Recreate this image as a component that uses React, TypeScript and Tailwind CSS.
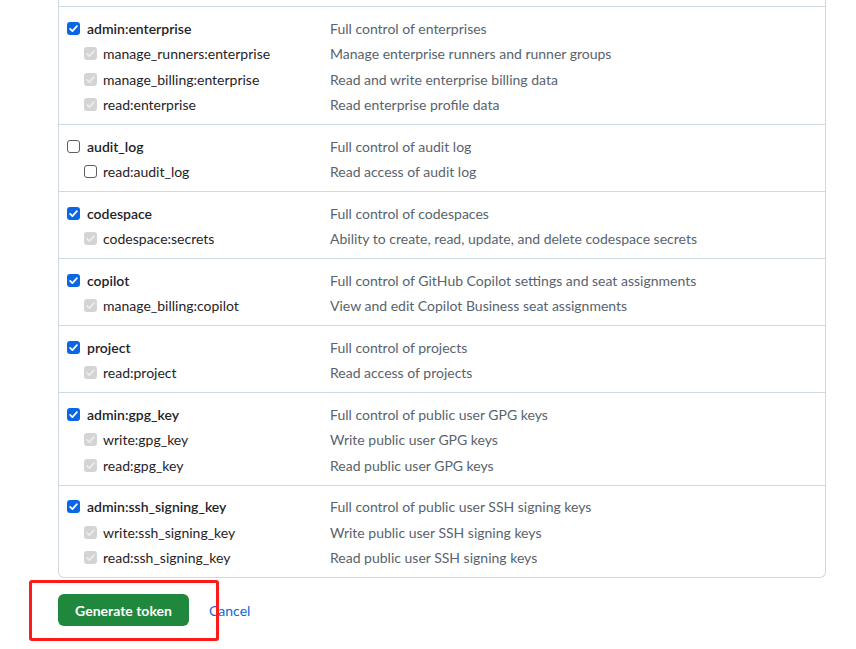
import React from "react"

type Scope = {
  name: string
  desc: string
  checked: boolean
  children: { name: string; desc: string }[]
}

const scopes: Scope[] = [
  {
    name: "admin:enterprise",
    desc: "Full control of enterprises",
    checked: true,
    children: [
      { name: "manage_runners:enterprise", desc: "Manage enterprise runners and runner groups" },
      { name: "manage_billing:enterprise", desc: "Read and write enterprise billing data" },
      { name: "read:enterprise", desc: "Read enterprise profile data" },
    ],
  },
  {
    name: "audit_log",
    desc: "Full control of audit log",
    checked: false,
    children: [{ name: "read:audit_log", desc: "Read access of audit log" }],
  },
  {
    name: "codespace",
    desc: "Full control of codespaces",
    checked: true,
    children: [
      { name: "codespace:secrets", desc: "Ability to create, read, update, and delete codespace secrets" },
    ],
  },
  {
    name: "copilot",
    desc: "Full control of GitHub Copilot settings and seat assignments",
    checked: true,
    children: [
      { name: "manage_billing:copilot", desc: "View and edit Copilot Business seat assignments" },
    ],
  },
  {
    name: "project",
    desc: "Full control of projects",
    checked: true,
    children: [{ name: "read:project", desc: "Read access of projects" }],
  },
  {
    name: "admin:gpg_key",
    desc: "Full control of public user GPG keys",
    checked: true,
    children: [
      { name: "write:gpg_key", desc: "Write public user GPG keys" },
      { name: "read:gpg_key", desc: "Read public user GPG keys" },
    ],
  },
  {
    name: "admin:ssh_signing_key",
    desc: "Full control of public user SSH signing keys",
    checked: true,
    children: [
      { name: "write:ssh_signing_key", desc: "Write public user SSH signing keys" },
      { name: "read:ssh_signing_key", desc: "Read public user SSH signing keys" },
    ],
  },
]

// variant: "on" = blue checked, "off" = empty, "dis" = disabled checked
const Box = ({ variant }: { variant: "on" | "off" | "dis" }) => {
  if (variant === "off") {
    return <span className="block h-[13px] w-[13px] shrink-0 rounded-[3px] border border-[#5a5f66] bg-white" />
  }
  return (
    <span
      className={
        variant === "on"
          ? "flex h-[13px] w-[13px] shrink-0 items-center justify-center rounded-[3px] bg-[#0a66e4]"
          : "flex h-[13px] w-[13px] shrink-0 items-center justify-center rounded-[3px] bg-[#d4d4d4]"
      }
    >
      <svg viewBox="0 0 12 12" className="h-[11px] w-[11px]">
        <path
          d="M2.3 6.4 L4.8 8.9 L9.7 3.4"
          fill="none"
          stroke={variant === "on" ? "#ffffff" : "#ececec"}
          strokeWidth="1.9"
          strokeLinecap="round"
          strokeLinejoin="round"
        />
      </svg>
    </span>
  )
}

export default function App() {
  return (
    <div
      className="relative min-h-[649px] bg-white pl-[58px] text-[14px] text-[#1f2328]"
      style={{ fontFamily: 'Lato, "Noto Sans", sans-serif' }}
    >
      <div className="w-[768px] rounded-b-md border-x border-b border-[#d1d9e0] pt-[6px]">
        {scopes.map((s) => (
          <div key={s.name} className="border-t border-[#d1d9e0] pb-[7px] pt-2">
            <div className="flex h-[25.5px] items-center pt-[1px]">
              <div className="flex w-[271px] items-center gap-[7px] pl-2">
                <Box variant={s.checked ? "on" : "off"} />
                <span className="font-semibold">{s.name}</span>
              </div>
              <span className="text-[#59636e]">{s.desc}</span>
            </div>
            {s.children.map((c) => (
              <div key={c.name} className="flex h-[25.5px] items-center pt-[1px]">
                <div className="flex w-[271px] items-center gap-[6px] pl-[25px]">
                  <Box variant={s.checked ? "dis" : "off"} />
                  <span>{c.name}</span>
                </div>
                <span className="text-[#59636e]">{c.desc}</span>
              </div>
            ))}
          </div>
        ))}
      </div>

      <div className="mt-4 flex items-center gap-5">
        <button className="h-8 w-[131px] rounded-md bg-[#1f883d] text-[14px] font-bold text-white">
          Generate token
        </button>
        <a className="text-[#0969da]">Cancel</a>
      </div>

      {/* red annotation box */}
      <div className="pointer-events-none absolute left-[29px] top-[580px] h-[61px] w-[190px] rounded-[3px] border-[3px] border-[#ff1a1a]" />
    </div>
  )
}
